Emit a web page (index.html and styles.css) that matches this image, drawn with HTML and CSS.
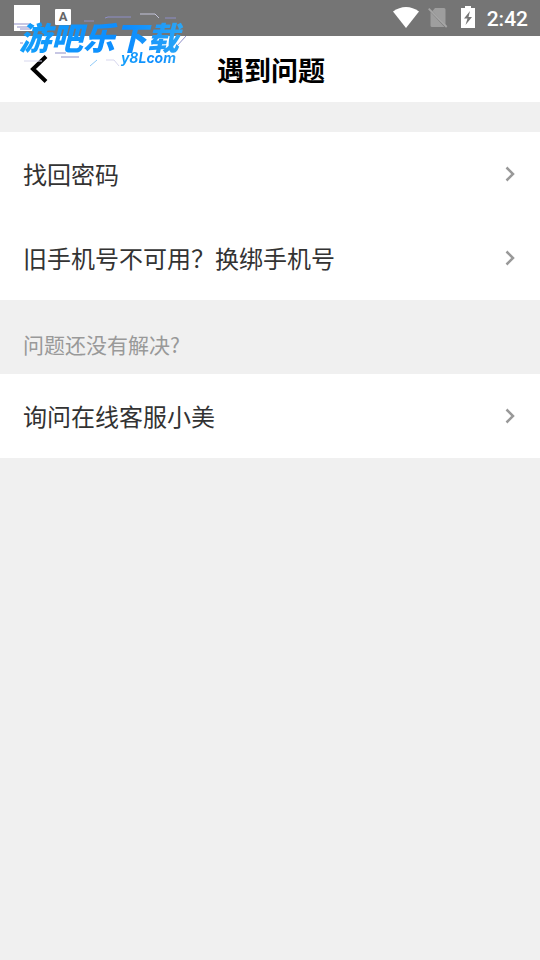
FILE: index.html
```html
<!DOCTYPE html>
<html lang="zh-CN">
<head>
<meta charset="utf-8">
<meta name="viewport" content="width=device-width, initial-scale=1">
<title>遇到问题</title>
<link rel="stylesheet" href="styles.css">
</head>
<body>
<div class="status">
  <div class="status-left">
    <span class="notice"></span>
    <span class="keyboard">A</span>
  </div>
  <div class="status-right">
    <svg class="wifi" viewBox="0 0 26 21" aria-hidden="true"><path d="M0 4.5C8-1.500 18-1.500 26 4.500L13 21Z" fill="#fff"/></svg>
    <svg class="sim" viewBox="0 0 20 21" aria-hidden="true"><path d="M7 1H16Q17.500 1 17.500 2.500V18L4.500 4ZM2.500 5V18.500Q2.500 20 4 20H16.500Z" fill="#9e9e9e"/><path d="M.7 1.700L18.700 20" stroke="#a6a6a6" stroke-width="1.800"/></svg>
    <svg class="battery" viewBox="0 0 14 22" aria-hidden="true"><path d="M4 0H10V2H14V22H0V2H4Z" fill="#fff"/><path d="M9 5L3 12.500H6.500L4.500 19L11 11H7.500Z" fill="#757575"/></svg>
    <time>2:42</time>
  </div>
</div>
<header class="header">
  <button class="back" type="button" aria-label="返回">
    <svg viewBox="0 0 18 28" aria-hidden="true"><path d="M16 1.500L3 14L16 26.500" fill="none" stroke="#000" stroke-width="4"/></svg>
  </button>
  <h1>遇到问题</h1>
</header>
<main>
  <nav class="list">
    <a class="row" href="#password">找回密码<svg viewBox="0 0 10 16" aria-hidden="true"><path d="M1.500 1.500L8 8L1.500 14.500"/></svg></a>
    <a class="row" href="#phone">旧手机号不可用？换绑手机号<svg viewBox="0 0 10 16" aria-hidden="true"><path d="M1.500 1.500L8 8L1.500 14.500"/></svg></a>
  </nav>
  <h2>问题还没有解决?</h2>
  <nav class="list">
    <a class="row" href="#service">询问在线客服小美<svg viewBox="0 0 10 16" aria-hidden="true"><path d="M1.500 1.500L8 8L1.500 14.500"/></svg></a>
  </nav>
</main>
<div class="watermark">
  <svg class="streaks" viewBox="0 0 176 56" aria-hidden="true">
    <g fill="none" stroke="#8f8fc8" stroke-width="1">
      <path d="M4 12H21M7 15H19M10 17H21M95 6L98 5H121M74 9H84M155 6H166M10 31H13M45 41H56M51 45H69M176 24L166 35"/>
      <path d="M130 2H145L149 6" stroke="#c4c4da"/>
      <path d="M14 49H32M96 48H104L109 54" stroke="#d7d7ee"/>
      <path d="M80 54L87 48" stroke="#8fcaf8"/>
    </g>
  </svg>
  <span class="brand">游吧乐下载</span>
  <span class="domain">y8Lcom</span>
</div>
</body>
</html>
```

FILE: styles.css
```css
* { box-sizing: border-box; }

body {
  margin: 0;
  min-height: 100vh;
  position: relative;
  background: #f0f0f0;
  color: #333;
  font-family: "Noto Sans CJK SC", sans-serif;
}

.status {
  display: flex;
  justify-content: space-between;
  height: 36px;
  padding: 0 12px 0 14px;
  background: #757575;
  color: #fff;
}

.status-left {
  display: flex;
  gap: 15px;
}

.notice {
  width: 26px;
  height: 26px;
  margin-top: 5px;
  background: #fff;
}

.keyboard {
  width: 16px;
  height: 16px;
  margin-top: 9px;
  border-radius: 1px;
  background: #fff;
  color: #666;
  font: 700 13px/16px Roboto, sans-serif;
  text-align: center;
}

.status-right {
  display: flex;
  align-items: center;
  padding-bottom: 2px;
}

.wifi { width: 26px; height: 21px; margin-right: 9px; }
.sim { width: 20px; height: 21px; margin-right: 13px; }
.battery { width: 14px; height: 22px; margin-right: 12px; }

.status time {
  padding-top: 4px;
  font: 500 21px/24px Roboto, sans-serif;
}

.header {
  display: grid;
  grid-template-columns: 72px 1fr 70px;
  align-items: center;
  height: 66px;
  background: #fff;
}

.back {
  display: flex;
  align-items: center;
  height: 66px;
  padding: 0 0 0 30px;
  border: 0;
  background: none;
}

.back svg { width: 18px; height: 28px; }

h1 {
  margin: 0;
  padding-top: 2px;
  color: #000;
  font-size: 27px;
  font-weight: 700;
  line-height: 40px;
  text-align: center;
}

main { padding-top: 30px; }

.list { background: #fff; }

.row {
  display: flex;
  align-items: center;
  justify-content: space-between;
  height: 84px;
  padding: 0 25px 0 23px;
  color: #333;
  font-size: 24px;
  line-height: 36px;
  text-decoration: none;
}

.row svg {
  width: 10px;
  height: 16px;
  fill: none;
  stroke: #999;
  stroke-width: 2.5;
}

h2 {
  margin: 0;
  padding: 28px 23px 14px;
  color: #999;
  font-size: 21px;
  font-weight: 400;
  line-height: 32px;
}

.watermark {
  position: absolute;
  top: 12px;
  left: 10px;
  width: 176px;
  height: 56px;
  pointer-events: none;
}

.streaks {
  position: absolute;
  width: 176px;
  height: 56px;
}

.brand,
.domain {
  position: absolute;
  background: linear-gradient(90deg, #14a0fa, #0c8cff 65%, #2ea8f5);
  background-clip: text;
  color: transparent;
  font-style: italic;
  font-weight: 900;
  white-space: nowrap;
}

.brand {
  top: 6px;
  left: 1px;
  padding: 0 8px;
  font-size: 32px;
  line-height: 36px;
}

.domain {
  top: 37px;
  right: 6px;
  padding: 0 4px;
  font-family: Inter, sans-serif;
  font-size: 14px;
  font-weight: 700;
  line-height: 18px;
}
```
